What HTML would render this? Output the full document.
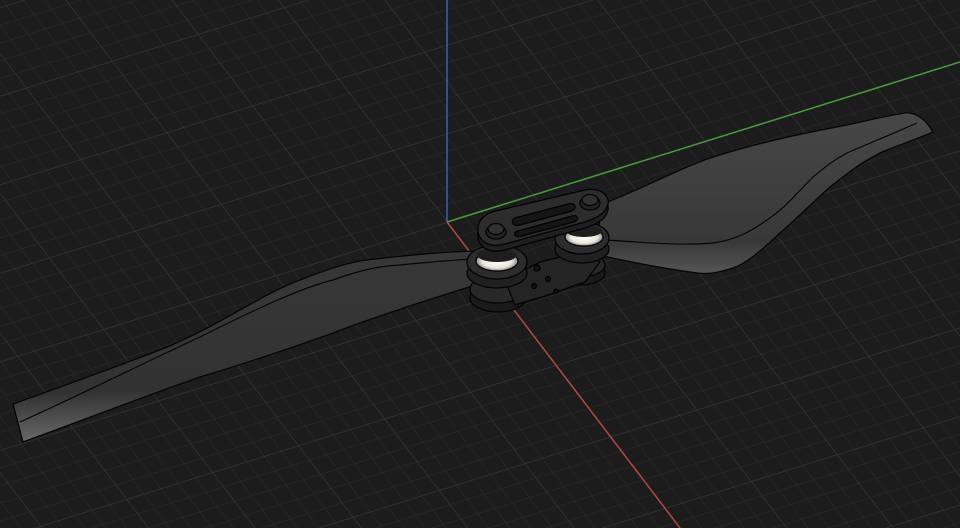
<!DOCTYPE html>
<html><head><meta charset="utf-8"><style>
html,body{margin:0;padding:0;background:#1c1c1c;overflow:hidden}
svg{display:block}
</style></head><body>
<svg width="960" height="528" viewBox="0 0 960 528" xmlns="http://www.w3.org/2000/svg">
<defs>
<pattern id="g1" width="18" height="18" patternUnits="userSpaceOnUse" patternTransform="matrix(0.955 -0.298 0.605 0.795 447 222)">
<path d="M0 0H18M0 0V18" stroke="#2a2a2a" stroke-width="1.2" fill="none"/>
</pattern>
<pattern id="g2" width="90" height="90" patternUnits="userSpaceOnUse" patternTransform="matrix(0.955 -0.298 0.605 0.795 447 222)">
<path d="M0 0H90M0 0V90" stroke="#333" stroke-width="1.4" fill="none"/>
</pattern>
<linearGradient id="bl" x1="0" y1="0" x2="0.1" y2="1">
<stop offset="0" stop-color="#383838"/><stop offset="0.75" stop-color="#323232"/><stop offset="1" stop-color="#6a6a6a"/>
</linearGradient>
<linearGradient id="br" x1="0" y1="0" x2="0" y2="1">
<stop offset="0" stop-color="#474747"/><stop offset="0.8" stop-color="#383838"/><stop offset="1" stop-color="#555"/>
</linearGradient>
<radialGradient id="wh"><stop offset="0" stop-color="#fff"/><stop offset="0.7" stop-color="#ece8dc"/><stop offset="1" stop-color="#888"/></radialGradient>
</defs>
<rect width="960" height="528" fill="#1c1c1c"/>
<rect width="960" height="528" fill="url(#g1)"/>
<rect width="960" height="528" fill="url(#g2)"/>
<line x1="447" y1="0" x2="447" y2="222" stroke="#3a6ad0" stroke-width="1.3"/>
<line x1="447" y1="222" x2="960" y2="62" stroke="#4a9a40" stroke-width="1.5"/>
<line x1="447" y1="222" x2="680" y2="528" stroke="#b04a3a" stroke-width="1.5"/>

<path d="M13 404 C80 380 130 362 167 347 C220 325 260 295 300 280 C330 268 350 262 367 260 C400 256 440 252 475 251 L482 283 C440 296 380 315 333 333 C280 352 240 365 200 377 C140 398 70 425 23 442 Z" fill="url(#bl)" stroke="#050505" stroke-width="1.3"/>
<path d="M20 422 C80 395 150 360 200 337 C250 312 300 288 333 280 C360 270 380 266 400 265 C430 262 450 260 475 259" fill="none" stroke="#050505" stroke-width="1.2"/>

<path d="M600 205 C640 190 680 168 713 157 C760 142 810 132 847 125 C870 120 890 115 905 113 C915 112 925 118 933 132 C915 140 895 146 880 153 C860 163 845 175 830 187 C810 205 795 220 780 233 C760 252 745 264 733 268 C715 274 705 274 697 273 C660 268 630 262 598 255 Z" fill="url(#br)" stroke="#050505" stroke-width="1.3"/>
<path d="M917 123 C890 135 865 145 847 153 C830 162 822 170 813 177 C795 195 785 208 767 220 C750 232 735 240 713 243 C680 246 640 242 605 240" fill="none" stroke="#050505" stroke-width="1.2"/>

<g stroke="#000" stroke-width="1.2">
<ellipse cx="498" cy="298" rx="28" ry="14" fill="#1a1a1a"/>
<ellipse cx="498" cy="289" rx="28" ry="14" fill="#282828"/>
<ellipse cx="580" cy="273" rx="25" ry="12" fill="#1a1a1a"/>
<ellipse cx="580" cy="265" rx="25" ry="12" fill="#282828"/>
<path d="M505 280 L540 262 L580 252 L600 262 L585 282 L545 296 L515 305 Z" fill="#242424"/>
<circle cx="537" cy="268" r="3" fill="#111"/><circle cx="548" cy="279" r="2.5" fill="#111"/><circle cx="534" cy="286" r="2.5" fill="#111"/><circle cx="556" cy="291" r="2" fill="#111"/>
<ellipse cx="497" cy="273" rx="30" ry="15" fill="#202020"/>
<ellipse cx="497" cy="262" rx="30" ry="17" fill="#2c2c2c"/>
<ellipse cx="497" cy="261" rx="21" ry="10" fill="url(#wh)"/>
<ellipse cx="497" cy="255" rx="20" ry="7" fill="#1e1e1e" stroke="none"/>
<ellipse cx="582" cy="249" rx="27" ry="14" fill="#202020"/>
<ellipse cx="582" cy="238" rx="27" ry="16" fill="#2c2c2c"/>
<ellipse cx="584" cy="237" rx="19" ry="9" fill="url(#wh)"/>
<ellipse cx="584" cy="231" rx="18" ry="6" fill="#1e1e1e" stroke="none"/>
<path d="M478 238 C476 226 486 218 500 216 L585 196 C598 193 610 200 608 210 C606 220 596 224 585 228 L505 250 C490 254 480 248 478 238 Z" fill="#1f1f1f"/>
<path d="M478 232 C476 220 486 212 500 210 L585 190 C598 187 610 194 608 204 C606 214 596 218 585 222 L505 244 C490 248 480 242 478 232 Z" fill="#2c2c2c"/>
<path d="M515 218 L568 204 C575 202 578 208 572 211 L520 225 C512 227 510 220 515 218 Z" fill="#151515"/>
<path d="M518 231 L572 216 C578 214 580 220 574 222 L522 236 C514 238 512 233 518 231 Z" fill="#151515"/>
<ellipse cx="496" cy="232" rx="10" ry="7" fill="#222"/>
<ellipse cx="496" cy="229" rx="8" ry="5.5" fill="#303030"/>
<ellipse cx="590" cy="203" rx="10" ry="7" fill="#222"/>
<ellipse cx="590" cy="200" rx="8" ry="5.5" fill="#303030"/>
</g>
</svg>
</body></html>
